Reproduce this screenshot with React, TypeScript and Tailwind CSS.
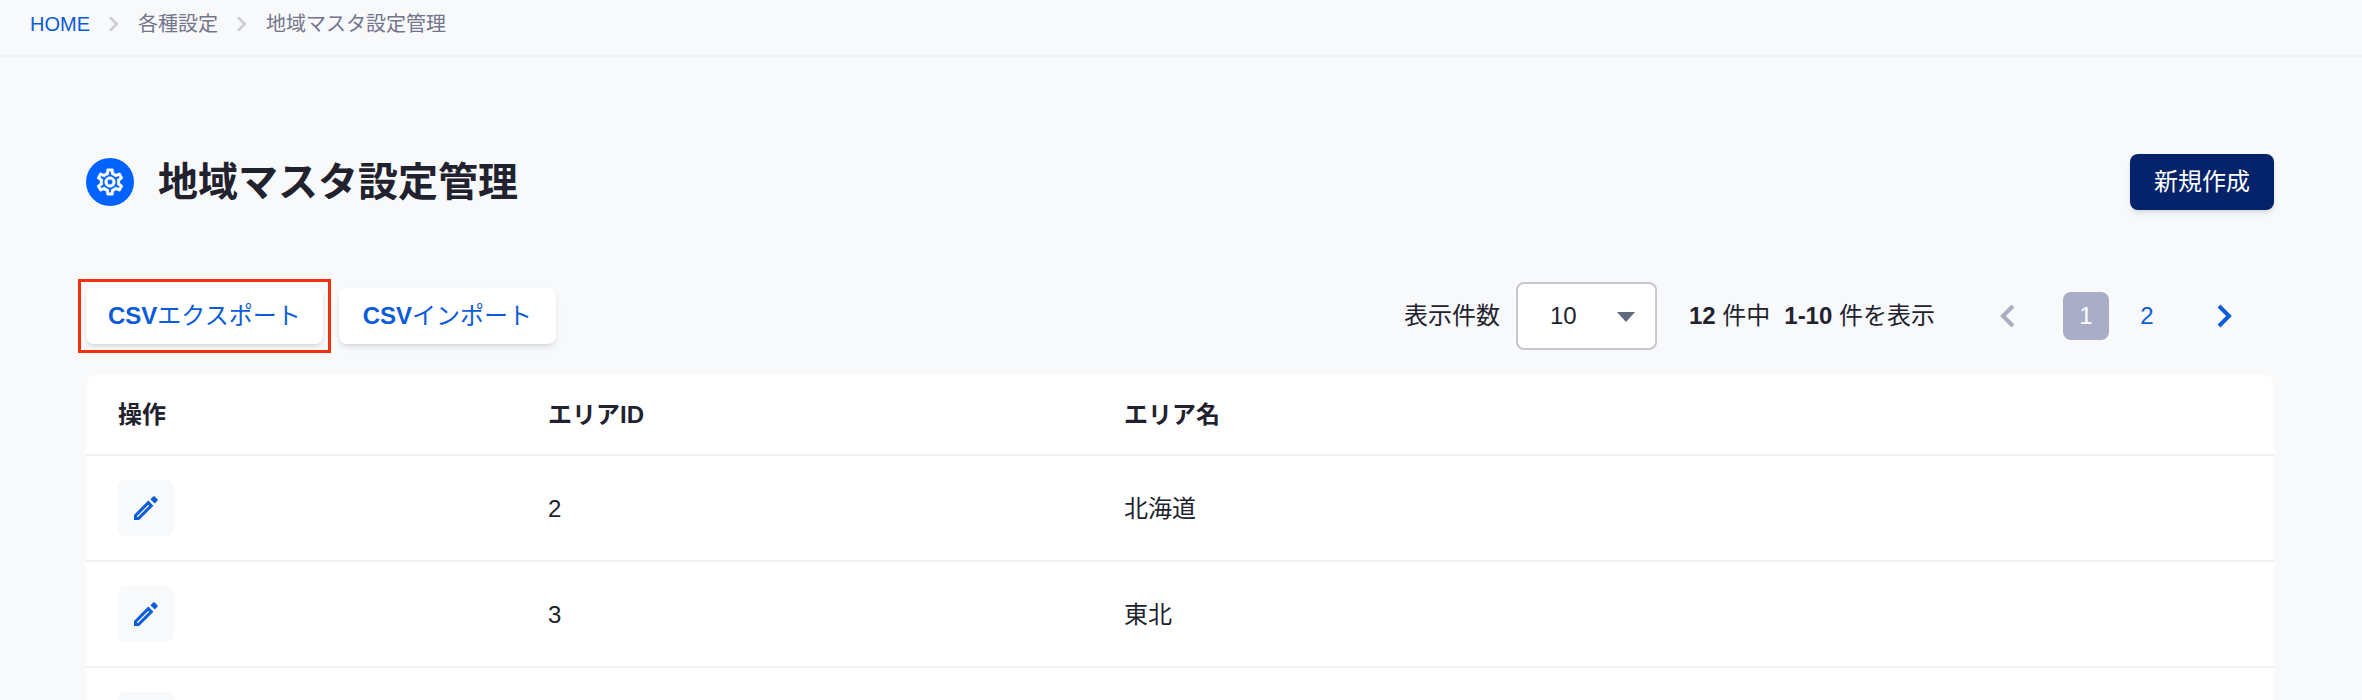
import { useState } from "react";

const areas = [
  { id: 2, name: "北海道" },
  { id: 3, name: "東北" },
  { id: 4, name: "関東" },
];

const crumbs = ["各種設定", "地域マスタ設定管理"];

function Chevron({ className, width, flip = false }: { className: string; width: number; flip?: boolean }) {
  return (
    <svg viewBox="0 0 16 24" fill="none" stroke="currentColor" strokeWidth={width} className={className} aria-hidden="true">
      <path d={flip ? "M14 2 4 12l10 10" : "M2 2l10 10L2 22"} />
    </svg>
  );
}

function GearIcon() {
  return (
    <span className="flex size-12 items-center justify-center rounded-full bg-[#0062ff] text-white">
      <svg viewBox="0 0 24 24" fill="currentColor" stroke="currentColor" strokeWidth="0.3" className="size-8" aria-hidden="true">
        <path d="M19.43 12.98c.04-.32.07-.64.07-.98 0-.34-.03-.66-.07-.98l2.11-1.65c.19-.15.24-.42.12-.64l-2-3.46c-.09-.16-.26-.25-.44-.25-.06 0-.12.01-.17.03l-2.49 1c-.52-.4-1.08-.73-1.69-.98l-.38-2.65C14.46 2.18 14.25 2 14 2h-4c-.25 0-.46.18-.49.42l-.38 2.65c-.61.25-1.17.59-1.69.98l-2.49-1c-.06-.02-.12-.03-.18-.03-.17 0-.34.09-.43.25l-2 3.46c-.13.22-.07.49.12.64l2.11 1.65c-.04.32-.07.65-.07.98 0 .33.03.66.07.98l-2.11 1.65c-.19.15-.24.42-.12.64l2 3.46c.09.16.26.25.44.25.06 0 .12-.01.17-.03l2.49-1c.52.4 1.08.73 1.69.98l.38 2.65c.03.24.24.42.49.42h4c.25 0 .46-.18.49-.42l.38-2.65c.61-.25 1.17-.59 1.69-.98l2.49 1c.06.02.12.03.18.03.17 0 .34-.09.43-.25l2-3.46c.12-.22.07-.49-.12-.64l-2.11-1.65zm-1.98-1.71c.04.31.05.52.05.73 0 .21-.02.43-.05.73l-.14 1.13.89.7 1.08.84-.7 1.21-1.27-.51-1.04-.42-.9.68c-.43.32-.84.56-1.25.73l-1.06.43-.16 1.13-.2 1.35h-1.4l-.19-1.35-.16-1.13-1.06-.43c-.43-.18-.83-.41-1.23-.71l-.91-.7-1.06.43-1.27.51-.7-1.21 1.08-.84.89-.7-.14-1.13c-.03-.31-.05-.54-.05-.74s.02-.43.05-.73l.14-1.13-.89-.7-1.08-.84.7-1.21 1.27.51 1.04.42.9-.68c.43-.32.84-.56 1.25-.73l1.06-.43.16-1.13.2-1.35h1.39l.19 1.35.16 1.13 1.06.43c.43.18.83.41 1.23.71l.91.7 1.06-.43 1.27-.51.7 1.21-1.07.85-.89.7.14 1.13zM12 8c-2.21 0-4 1.79-4 4s1.79 4 4 4 4-1.79 4-4-1.79-4-4-4zm0 6c-1.1 0-2-.9-2-2s.9-2 2-2 2 .9 2 2-.9 2-2 2z" />
      </svg>
    </span>
  );
}

function PencilIcon() {
  return (
    <svg viewBox="0 0 24 24" fill="none" className="size-6" aria-hidden="true">
      <path d="M1.5 22.5v-3L14.3 6.7l3 3L4.5 22.5z" stroke="currentColor" strokeWidth="3" />
      <path d="M16.4 3.2 19.2.6q.8-.8 1.6 0l2.6 2.6q.8.8 0 1.6l-2.6 2.8z" fill="currentColor" />
    </svg>
  );
}

export default function App() {
  const [pageSize, setPageSize] = useState("10");

  return (
    <div className="h-screen overflow-hidden bg-[#f8f9fb] font-['Liberation_Sans','Noto_Sans_CJK_JP',sans-serif] text-2xl text-[#22222f]">
      <nav aria-label="パンくず" className="flex h-[57px] items-start border-b-2 border-[#f0f1f3] px-[30px] pt-2 text-xl leading-8 text-[#73758c]">
        <ol className="flex items-center">
          <li>
            <a href="#home" className="text-[#0b5cd8]">HOME</a>
          </li>
          {crumbs.map((label) => (
            <li key={label} className="flex items-center">
              <Chevron className="mr-[18px] ml-[18px] h-4 w-3 text-[#ccccd8]" width={4} />
              <span>{label}</span>
            </li>
          ))}
        </ol>
      </nav>

      <main className="pt-[97px] pr-[88px] pl-[86px]">
        <header className="flex items-center justify-between">
          <div className="flex items-center gap-6">
            <GearIcon />
            <h1 className="text-[40px] leading-14 font-bold">地域マスタ設定管理</h1>
          </div>
          <button type="button" className="h-14 rounded-lg bg-[#05236a] px-6 text-white shadow-md">
            新規作成
          </button>
        </header>

        <div className="mt-18 flex h-[68px] items-center justify-between">
          <div className="flex gap-4">
            <div className="relative">
              <button type="button" className="h-14 rounded-lg bg-white px-[22px] text-[#0b5cd8] shadow-md">
                <b>CSV</b>エクスポート
              </button>
              <span className="pointer-events-none absolute -inset-x-2 -inset-y-[9px] border-[3px] border-[#f0300f]" />
            </div>
            <button type="button" className="h-14 rounded-lg bg-white px-6 text-[#0b5cd8] shadow-md">
              <b>CSV</b>インポート
            </button>
          </div>

          <div className="flex items-center">
            <label htmlFor="page-size" className="mr-4">表示件数</label>
            <div className="relative">
              <select
                id="page-size"
                value={pageSize}
                onChange={(e) => setPageSize(e.target.value)}
                className="h-[68px] w-[141px] appearance-none rounded-lg border-2 border-[#c6c6cc] bg-white pl-8"
              >
                <option>10</option>
                <option>20</option>
                <option>50</option>
              </select>
              <svg viewBox="0 0 18 10" fill="#5f6a7d" className="pointer-events-none absolute top-[30px] right-[22px] h-2.5 w-[18px]" aria-hidden="true">
                <path d="M0 0h18L9 10z" />
              </svg>
            </div>
            <p className="ml-8 flex gap-3.5">
              <span><b>12</b> 件中</span>
              <span><b>1-10</b> 件を表示</span>
            </p>
            <nav aria-label="ページ" className="mr-[41px] ml-16 flex items-center">
              <button type="button" disabled aria-label="前へ" className="text-[#a9adbf]">
                <Chevron className="h-6 w-4" width={4} flip />
              </button>
              <a href="#page-1" aria-current="page" className="ml-12 flex h-12 w-[46px] items-center justify-center rounded-lg bg-[#a9aec6] text-white">1</a>
              <a href="#page-2" className="flex h-12 w-[76px] items-center justify-center text-[#0b5cd8]">2</a>
              <button type="button" aria-label="次へ" className="ml-8 text-[#0b5cd8]">
                <Chevron className="h-6 w-4" width={4} />
              </button>
            </nav>
          </div>
        </div>

        <div className="mt-6 overflow-hidden rounded-t-xl bg-white">
          <table className="w-full table-fixed border-separate border-spacing-0 text-left">
            <thead>
              <tr className="h-[82px]">
                <th className="w-[430px] border-b-2 border-[#f0f1f2] px-8 pt-0.5">操作</th>
                <th className="w-[576px] border-b-2 border-[#f0f1f2] px-8 pt-0.5">エリアID</th>
                <th className="border-b-2 border-[#f0f1f2] px-8 pt-0.5">エリア名</th>
              </tr>
            </thead>
            <tbody className="leading-7">
              {areas.map((area) => (
                <tr key={area.id} className="h-[106px]">
                  <td className="border-b-2 border-[#f0f1f2] px-8">
                    <button type="button" aria-label="編集" className="flex size-14 items-center justify-center rounded-lg bg-[#f7f9fb] text-[#0b5cd8]">
                      <PencilIcon />
                    </button>
                  </td>
                  <td className="border-b-2 border-[#f0f1f2] px-8 pt-0.5">{area.id}</td>
                  <td className="border-b-2 border-[#f0f1f2] px-8 pt-0.5">{area.name}</td>
                </tr>
              ))}
            </tbody>
          </table>
        </div>
      </main>
    </div>
  );
}
